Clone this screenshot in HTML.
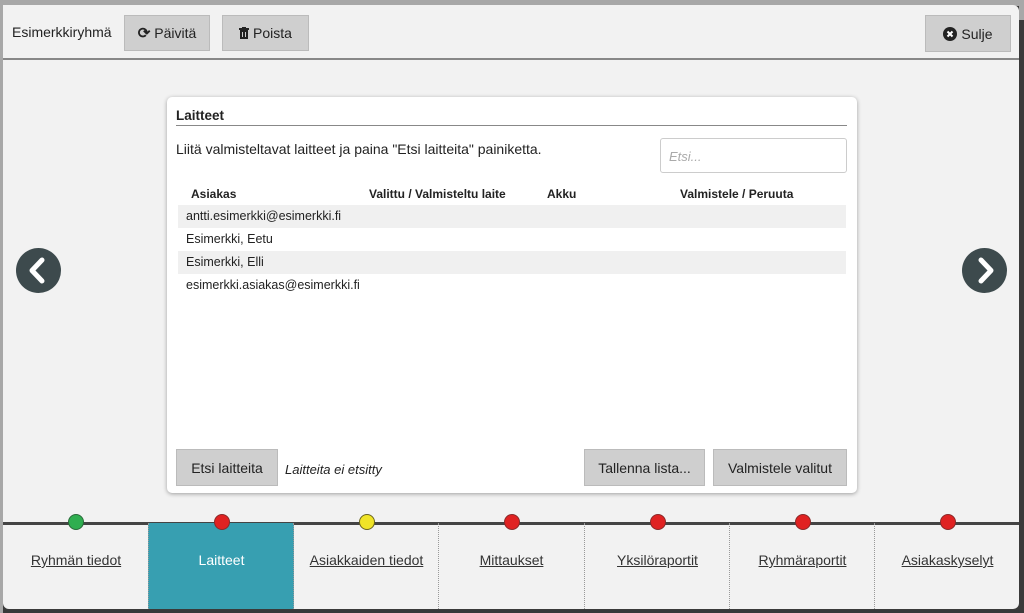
<!DOCTYPE html>
<html><head><meta charset="utf-8"><style>
*{box-sizing:border-box;margin:0;padding:0}
body{width:1024px;height:613px;background:#3a3a3a;font-family:"Liberation Sans",sans-serif;position:relative;overflow:hidden;color:#222}
.top{position:absolute;left:0;top:0;width:1024px;height:6px;background:#a8a8a8}
.lside{position:absolute;left:0;top:0;width:3px;height:613px;background:#a8a8a8}
.rside{position:absolute;left:1019px;top:0;width:5px;height:20px;background:#a8a8a8}
.panel{position:absolute;left:3px;top:5px;width:1016px;height:604px;background:#f2f2f2;border-radius:0 6px 6px 6px}
.hdr{position:absolute;left:0;top:0;width:1016px;height:55px;border-bottom:2px solid #888}
.btn{position:absolute;background:#cfcfcf;border:1px solid #bbb;font-size:14px;color:#222;display:flex;align-items:center;justify-content:center;gap:4px}
.card{position:absolute;left:164px;top:92px;width:690px;height:396px;background:#fff;border-radius:5px;box-shadow:0 1px 4px rgba(0,0,0,.35)}
.row{position:absolute;left:11px;width:668px;height:23px;font-size:12.5px;line-height:23px;padding-left:8px}
.th{position:absolute;top:90px;font-size:12px;font-weight:bold}
.arrow{position:absolute;width:45px;height:45px;border-radius:50%;background:#3d4a4d}
.tabs{position:absolute;left:0;top:518px;width:1016px;height:86px;z-index:3}
.tab{position:absolute;top:0;height:86px;width:146px;border-left:1px dotted #999;text-align:center;font-size:14px;padding-top:29px;color:#333;text-decoration:underline}
.line{position:absolute;left:0;top:517px;width:1016px;height:3px;background:#444;z-index:1}
.dot{position:absolute;top:-9px;left:50%;margin-left:-8px;width:16px;height:16px;border-radius:50%;border:1px solid #8a2a2a;background:#e02222;z-index:2}
</style></head><body>
<div class="top"></div><div class="lside"></div><div class="rside"></div>
<div class="panel">
 <div class="hdr">
  <div style="position:absolute;left:9px;top:19px;font-size:14px">Esimerkkiryhmä</div>
  <div class="btn" style="left:121px;top:10px;width:86px;height:36px"><span style="font-size:15px;font-weight:bold">⟳</span>Päivitä</div>
  <div class="btn" style="left:219px;top:10px;width:87px;height:36px"><svg width="10" height="12" viewBox="0 0 10 12"><rect x="0" y="1" width="10" height="2" fill="#222"/><rect x="3" y="0" width="4" height="2" fill="#222"/><path d="M1 3h8v9H1z" fill="#222"/><path d="M3.5 5v5M6.5 5v5" stroke="#cfcfcf" stroke-width="1"/></svg>Poista</div>
  <div class="btn" style="left:922px;top:10px;width:86px;height:37px"><svg width="14" height="14" viewBox="0 0 14 14"><circle cx="7" cy="7" r="7" fill="#222"/><path d="M4.5 4.5l5 5M9.5 4.5l-5 5" stroke="#fff" stroke-width="2"/></svg>Sulje</div>
 </div>
 <div class="arrow" style="left:13px;top:243px"><svg width="45" height="45"><path d="M26 12l-10 10.5 10 10.5" fill="none" stroke="#fff" stroke-width="5" stroke-linecap="round" stroke-linejoin="round"/></svg></div>
 <div class="arrow" style="left:959px;top:243px"><svg width="45" height="45"><path d="M19 12l10 10.5-10 10.5" fill="none" stroke="#fff" stroke-width="5" stroke-linecap="round" stroke-linejoin="round"/></svg></div>
 <div class="card">
  <div style="position:absolute;left:9px;top:11px;width:671px;height:18px;border-bottom:1px solid #888;font-size:13.5px;font-weight:bold">Laitteet</div>
  <div style="position:absolute;left:9px;top:44px;font-size:14px">Liitä valmisteltavat laitteet ja paina "Etsi laitteita" painiketta.</div>
  <div style="position:absolute;left:493px;top:41px;width:187px;height:35px;border:1px solid #ccc;border-radius:3px;font-size:13px;font-style:italic;color:#aaa;padding:10px 8px">Etsi...</div>
  <div class="th" style="left:24px">Asiakas</div>
  <div class="th" style="left:202px">Valittu / Valmisteltu laite</div>
  <div class="th" style="left:380px">Akku</div>
  <div class="th" style="left:513px">Valmistele / Peruuta</div>
  <div class="row" style="top:108px;background:#f0f0f0">antti.esimerkki@esimerkki.fi</div>
  <div class="row" style="top:131px">Esimerkki, Eetu</div>
  <div class="row" style="top:154px;background:#f0f0f0">Esimerkki, Elli</div>
  <div class="row" style="top:177px">esimerkki.asiakas@esimerkki.fi</div>
  <div class="btn" style="left:9px;top:352px;width:102px;height:37px">Etsi laitteita</div>
  <div style="position:absolute;left:118px;top:365px;font-size:13px;font-style:italic">Laitteita ei etsitty</div>
  <div class="btn" style="left:417px;top:352px;width:121px;height:37px">Tallenna lista...</div>
  <div class="btn" style="left:546px;top:352px;width:134px;height:37px">Valmistele valitut</div>
 </div>
 <div class="line"></div>
 <div class="tabs">
  <div class="tab" style="left:0;border-left:none">Ryhmän tiedot<div class="dot" style="background:#2fae50;border-color:#2a6a3a"></div></div>
  <div class="tab" style="left:145px;background:#379fb1;color:#fff;text-decoration:none">Laitteet<div class="dot"></div></div>
  <div class="tab" style="left:290px">Asiakkaiden tiedot<div class="dot" style="background:#f0e428;border-color:#6a6420"></div></div>
  <div class="tab" style="left:435px">Mittaukset<div class="dot"></div></div>
  <div class="tab" style="left:581px">Yksilöraportit<div class="dot"></div></div>
  <div class="tab" style="left:726px">Ryhmäraportit<div class="dot"></div></div>
  <div class="tab" style="left:871px">Asiakaskyselyt<div class="dot"></div></div>
 </div>
</div>
</body></html>
